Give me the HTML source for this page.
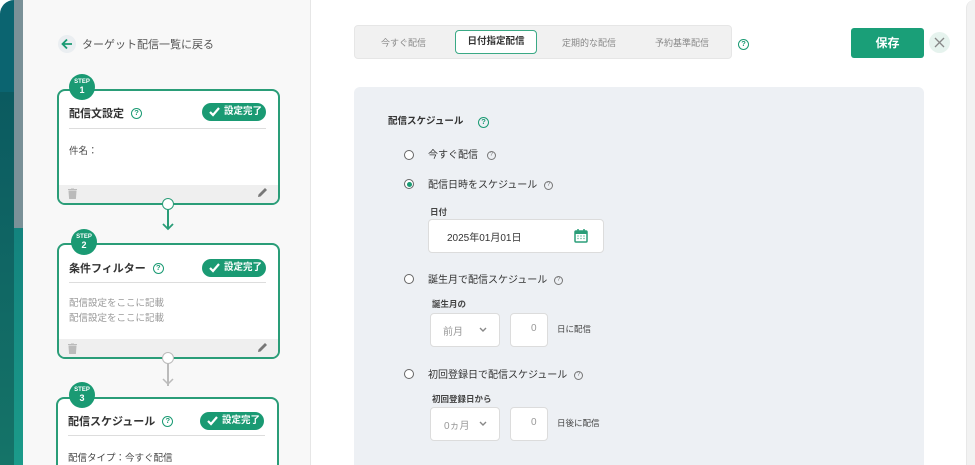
<!DOCTYPE html>
<html style="width:975px;height:465px;overflow:hidden"><head><meta charset="utf-8"><style>
*{box-sizing:border-box;margin:0;padding:0}
body{width:975px;height:465px;overflow:hidden;position:relative;background:#fff;font-family:"Liberation Sans","Noto Sans CJK JP",sans-serif;color:#333}
.a{position:absolute}
.card{position:absolute;border:2px solid #2a9d78;border-radius:8px;background:#fff;overflow:hidden}
.step{position:absolute;width:26px;height:26px;border-radius:50%;background:#1a9a73;color:#fff;text-align:center;font-weight:bold;line-height:1}
.step b{display:block;font-size:6px;margin-top:5px}
.step i{display:block;font-style:normal;font-size:9px;margin-top:1px}
.title{position:absolute;font-size:11px;font-weight:bold;color:#333}
.hq{display:inline-block;width:11px;height:11px;border:1.5px solid #1a9a73;border-radius:50%;color:#1a9a73;font-size:7.5px;text-align:center;line-height:8.5px;font-weight:bold;vertical-align:2px}
.hs{display:inline-block;width:9px;height:9px;border:1px solid #777;border-radius:50%;color:#777;font-size:6px;text-align:center;line-height:7px;vertical-align:2px}
.pill{position:absolute;width:64px;height:18px;border-radius:9px;background:#1a9a73;color:#fff;font-size:9.5px;font-weight:bold;line-height:18px;padding-left:22px}
.pill svg{position:absolute;left:7px;top:4px}
.div{position:absolute;height:1px;background:#ddd}
.foot{position:absolute;left:0;right:0;height:20px;background:#efefef}
.lbl{position:absolute;font-size:10px;color:#333}
.radio{position:absolute;width:10px;height:10px;border:1.2px solid #666;border-radius:50%;background:#fff}
.sm{position:absolute;font-size:8.5px;color:#444;font-weight:bold}
.box{position:absolute;background:#fff;border:1px solid #dcdcdc;border-radius:4px}
</style></head><body>
<div class="a" style="left:0;top:0;width:14px;height:92px;background:#0b6470;border-top-left-radius:14px"></div>
<div class="a" style="left:0;top:92px;width:14px;height:373px;background:linear-gradient(#0b5a60,#157468)"></div>
<div class="a" style="left:14px;top:0;width:9px;height:228px;background:#7a9198"></div>
<div class="a" style="left:14px;top:228px;width:9px;height:237px;background:linear-gradient(#13837e,#1b9b8a)"></div>
<div class="a" style="left:23px;top:0;width:288px;height:465px;background:#f8f8f8;border-right:1px solid #e6e6e6"></div>
<div class="a" style="left:966px;top:0;width:9px;height:465px;background:#f2f2f2;border-left:1px solid #e8e8e8;border-top-left-radius:8px"></div>

<div class="a" style="left:58px;top:35px;width:18px;height:18px;border-radius:50%;background:#eaeef1"></div>
<svg class="a" style="left:60px;top:37px" width="14" height="14" viewBox="0 0 14 14"><path d="M12 7H3M7 2.5L2.5 7 7 11.5" stroke="#1a9a73" stroke-width="1.8" fill="none"/></svg>
<div class="a" style="left:82px;top:36px;font-size:11px;color:#555">ターゲット配信一覧に戻る</div>

<div class="card" style="left:57px;top:89px;width:223px;height:116px">
<div class="foot" style="top:94px"></div></div>
<div class="title" style="left:69px;top:105px">配信文設定 <span class="hq" style="margin-left:4px">?</span></div>
<div class="pill" style="left:202px;top:103px"><svg width="11" height="10" viewBox="0 0 11 10"><path d="M1 5l3 3 6-7" stroke="#fff" stroke-width="2.2" fill="none"/></svg>設定完了</div>
<div class="div" style="left:69px;top:128px;width:197px"></div>
<div class="a" style="left:69px;top:143px;font-size:9.5px;color:#444">件名：</div>
<div class="step" style="left:69px;top:74px"><b>STEP</b><i>1</i></div>

<div class="a" style="left:167px;top:209px;width:2px;height:20px;background:#2a9d78"></div>
<svg class="a" style="left:162px;top:222px" width="12" height="9"><path d="M1 2l5 5 5-5" stroke="#2a9d78" stroke-width="1.8" fill="none"/></svg>
<div class="a" style="left:162px;top:198px;width:12px;height:12px;border-radius:50%;background:#fff;border:1.5px solid #2a9d78"></div>

<div class="card" style="left:57px;top:243px;width:223px;height:116px">
<div class="foot" style="top:94px"></div></div>
<div class="title" style="left:69px;top:260px">条件フィルター <span class="hq" style="margin-left:4px">?</span></div>
<div class="pill" style="left:202px;top:259px"><svg width="11" height="10" viewBox="0 0 11 10"><path d="M1 5l3 3 6-7" stroke="#fff" stroke-width="2.2" fill="none"/></svg>設定完了</div>
<div class="div" style="left:69px;top:282px;width:197px"></div>
<div class="a" style="left:69px;top:296px;font-size:9.5px;color:#999;line-height:15px">配信設定をここに記載<br>配信設定をここに記載</div>
<div class="step" style="left:71px;top:229px"><b>STEP</b><i>2</i></div>

<div class="a" style="left:167px;top:363px;width:1.5px;height:23px;background:#bbb"></div>
<svg class="a" style="left:162px;top:377px" width="12" height="9"><path d="M1 2l5 5 5-5" stroke="#bbb" stroke-width="1.5" fill="none"/></svg>
<div class="a" style="left:162px;top:352px;width:12px;height:12px;border-radius:50%;background:#fff;border:1.5px solid #bbb"></div>

<div class="card" style="left:56px;top:397px;width:223px;height:90px"></div>
<div class="title" style="left:68px;top:413px">配信スケジュール <span class="hq" style="margin-left:4px">?</span></div>
<div class="pill" style="left:200px;top:412px"><svg width="11" height="10" viewBox="0 0 11 10"><path d="M1 5l3 3 6-7" stroke="#fff" stroke-width="2.2" fill="none"/></svg>設定完了</div>
<div class="div" style="left:68px;top:435px;width:197px"></div>
<div class="a" style="left:68px;top:450px;font-size:9.5px;color:#444">配信タイプ：今すぐ配信</div>
<div class="step" style="left:69px;top:382px"><b>STEP</b><i>3</i></div>

<svg class="a" style="left:68px;top:188px" width="9" height="11" viewBox="0 0 9 11"><path d="M0 1.5h9M3 0h3M1 3h7l-.6 8H1.6z" fill="#bbb" stroke="#bbb" stroke-width="1"/></svg>
<svg class="a" style="left:68px;top:343px" width="9" height="11" viewBox="0 0 9 11"><path d="M0 1.5h9M3 0h3M1 3h7l-.6 8H1.6z" fill="#bbb" stroke="#bbb" stroke-width="1"/></svg>
<svg class="a" style="left:257px;top:187px" width="11" height="11" viewBox="0 0 11 11"><path d="M1 10l.5-2.5L8 1l2 2-6.5 6.5z" fill="#777"/></svg>
<svg class="a" style="left:257px;top:342px" width="11" height="11" viewBox="0 0 11 11"><path d="M1 10l.5-2.5L8 1l2 2-6.5 6.5z" fill="#777"/></svg>

<div class="a" style="left:354px;top:25px;width:378px;height:34px;background:#f1f1f1;border:1px solid #e6e6e6;border-radius:4px"></div>
<div class="a" style="left:381px;top:36px;font-size:9px;color:#888">今すぐ配信</div>
<div class="a" style="left:455px;top:30px;width:82px;height:24px;background:#fff;border:1.5px solid #3aa985;border-radius:4px;font-size:9.5px;font-weight:bold;color:#333;text-align:center;line-height:21px">日付指定配信</div>
<div class="a" style="left:562px;top:36px;font-size:9px;color:#888">定期的な配信</div>
<div class="a" style="left:655px;top:36px;font-size:9px;color:#888">予約基準配信</div>
<div class="a" style="left:738px;top:36px;line-height:11px"><span class="hq" style="vertical-align:0">?</span></div>
<div class="a" style="left:851px;top:28px;width:73px;height:30px;background:#1a9f78;border-radius:3px;color:#fff;font-size:12px;font-weight:bold;text-align:center;line-height:30px">保存</div>
<div class="a" style="left:929px;top:32px;width:21px;height:21px;border-radius:50%;background:#e6f3ee"></div>
<svg class="a" style="left:934px;top:37px" width="11" height="11"><path d="M1 1l9 9M10 1l-9 9" stroke="#888" stroke-width="1.3"/></svg>

<div class="a" style="left:354px;top:87px;width:570px;height:400px;background:#edf0f4;border-radius:6px"></div>
<div class="a" style="left:388px;top:113px;font-size:9.5px;font-weight:bold;color:#333">配信スケジュール</div>
<div class="a" style="left:478px;top:114px;line-height:11px"><span class="hq" style="vertical-align:0">?</span></div>

<div class="radio" style="left:404px;top:150px"></div>
<div class="lbl" style="left:428px;top:146px">今すぐ配信 <span class="hs" style="margin-left:6px">?</span></div>
<div class="radio" style="left:404px;top:179px"><div style="margin:1.5px;width:5px;height:5px;border-radius:50%;background:#1a9a73"></div></div>
<div class="lbl" style="left:428px;top:176px">配信日時をスケジュール <span class="hs" style="margin-left:4px">?</span></div>
<div class="sm" style="left:430px;top:206px">日付</div>
<div class="box" style="left:428px;top:219px;width:176px;height:34px"></div>
<div class="a" style="left:447px;top:229px;font-size:10px;color:#333">2025年01月01日</div>
<svg class="a" style="left:574px;top:229px" width="14" height="14" viewBox="0 0 14 14"><rect x="1" y="2" width="12" height="11" rx="1" fill="none" stroke="#2a9d78" stroke-width="1.5"/><rect x="1" y="2" width="12" height="3" fill="#2a9d78"/><path d="M4 0v3M10 0v3" stroke="#2a9d78" stroke-width="1.5"/><path d="M3.5 7h1M6.5 7h1M9.5 7h1M3.5 9.5h1M6.5 9.5h1M9.5 9.5h1" stroke="#2a9d78" stroke-width="1.2"/></svg>

<div class="radio" style="left:404px;top:274px"></div>
<div class="lbl" style="left:428px;top:271px">誕生月で配信スケジュール <span class="hs" style="margin-left:4px">?</span></div>
<div class="sm" style="left:432px;top:298px">誕生月の</div>
<div class="box" style="left:430px;top:313px;width:70px;height:34px"></div>
<div class="a" style="left:443px;top:323px;font-size:10px;color:#999">前月</div>
<svg class="a" style="left:479px;top:327px" width="8" height="6"><path d="M1 1l3 3 3-3" stroke="#888" stroke-width="1.4" fill="none"/></svg>
<div class="box" style="left:510px;top:313px;width:38px;height:34px"></div>
<div class="a" style="left:531px;top:323px;font-size:10px;color:#999">0</div>
<div class="sm" style="left:557px;top:323px;font-weight:normal">日に配信</div>

<div class="radio" style="left:404px;top:369px"></div>
<div class="lbl" style="left:428px;top:366px">初回登録日で配信スケジュール <span class="hs" style="margin-left:4px">?</span></div>
<div class="sm" style="left:432px;top:393px">初回登録日から</div>
<div class="box" style="left:430px;top:407px;width:70px;height:34px"></div>
<div class="a" style="left:444px;top:417px;font-size:10px;color:#999">0ヵ月</div>
<svg class="a" style="left:479px;top:421px" width="8" height="6"><path d="M1 1l3 3 3-3" stroke="#888" stroke-width="1.4" fill="none"/></svg>
<div class="box" style="left:510px;top:407px;width:38px;height:34px"></div>
<div class="a" style="left:531px;top:417px;font-size:10px;color:#999">0</div>
<div class="sm" style="left:557px;top:417px;font-weight:normal">日後に配信</div>
</body></html>
